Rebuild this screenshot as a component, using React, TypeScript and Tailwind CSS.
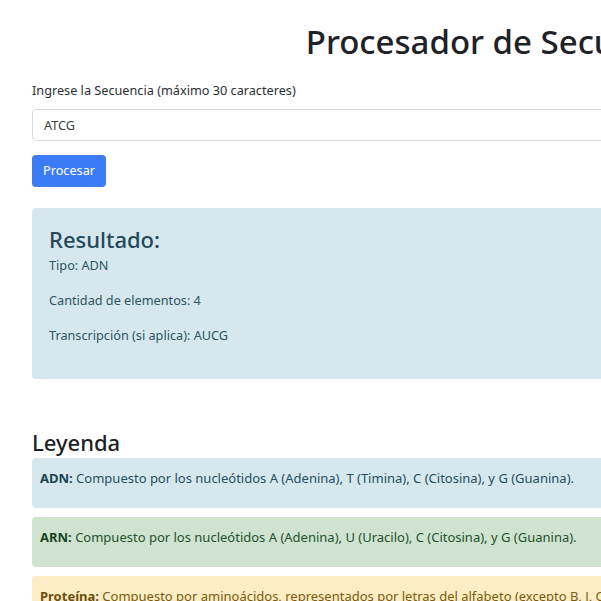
const FONT = '"Noto Sans", "Open Sans", sans-serif'

export default function App() {
  return (
    <div className="w-[601px] h-[601px] overflow-hidden bg-white" style={{ fontFamily: FONT }}>
      <div className="w-[956px] ml-[32px] text-[#212529]">
        <h1 className="pt-[22px] text-center text-[33px] leading-[40px] font-medium text-[#1e2125]">
          Procesador de Secuencias
        </h1>

        <div className="mt-[18px]">
          <label className="block text-[12.7px] leading-[20px] text-[#2b2f33]">
            Ingrese la Secuencia (máximo 30 caracteres)
          </label>
          <input
            readOnly
            value="ATCG"
            className="mt-[9px] block w-full h-[32px] px-[11px] text-[12.7px] text-[#3a3e42] border border-[#d8dcdf] rounded-[4px] outline-none"
          />
          <button className="mt-[14px] h-[32px] px-[11px] rounded-[4px] bg-[#3b7cf4] text-white text-[12.7px]">
            Procesar
          </button>
        </div>

        <div className="mt-[21px] h-[171px] rounded-[4px] bg-[#d6e7ee] px-[17px] pt-[18px] text-[#2c5564]">
          <h3 className="text-[22px] leading-[26px] font-medium text-[#23495a] mb-[3px]">Resultado:</h3>
          <p className="text-[12.7px] leading-[20px] mb-[15px]">Tipo: ADN</p>
          <p className="text-[12.7px] leading-[20px] mb-[15px]">Cantidad de elementos: 4</p>
          <p className="text-[12.7px] leading-[20px]">Transcripción (si aplica): AUCG</p>
        </div>

        <h3 className="mt-[49px] text-[22px] leading-[28px] font-medium text-[#1e2125]">Leyenda</h3>

        <div className="mt-[2px] flex flex-col gap-[9px]">
          <div className="h-[50px] rounded-[4px] bg-[#d6e7ee] px-[8px] pt-[10px] text-[13px] leading-[20px] text-[#24505f]">
            <strong className="font-bold text-[#1b4352]">ADN:</strong> Compuesto por los nucleótidos A (Adenina), T (Timina), C (Citosina), y G (Guanina).
          </div>
          <div className="h-[50px] rounded-[4px] bg-[#d0e2d0] px-[8px] pt-[10px] text-[13px] leading-[20px] text-[#23532b]">
            <strong className="font-bold text-[#1a4521]">ARN:</strong> Compuesto por los nucleótidos A (Adenina), U (Uracilo), C (Citosina), y G (Guanina).
          </div>
          <div className="h-[50px] rounded-[4px] bg-[#fcedc4] px-[8px] pt-[10px] text-[13px] leading-[20px] text-[#7a5c10]">
            <strong className="font-bold text-[#6b500c]">Proteína:</strong> Compuesto por aminoácidos, representados por letras del alfabeto (excepto B, J, O, U, X, Z).
          </div>
        </div>
      </div>
    </div>
  )
}
